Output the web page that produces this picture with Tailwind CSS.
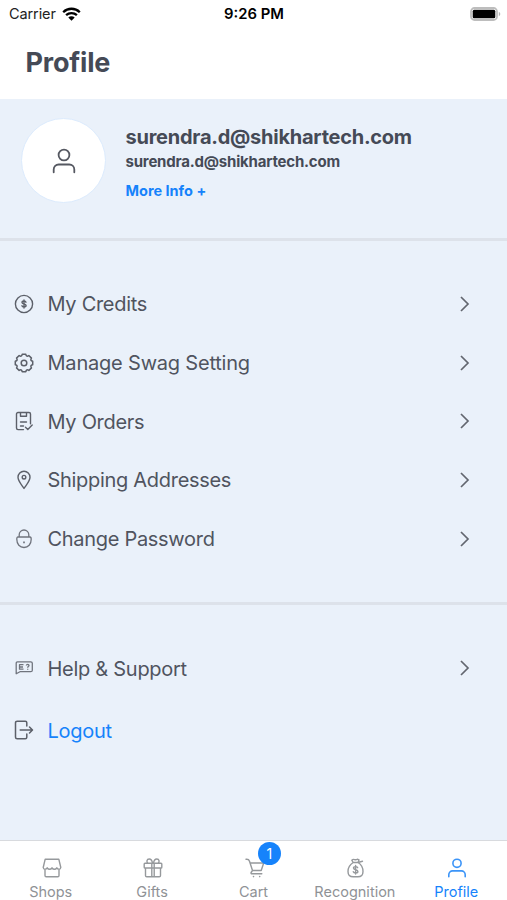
<!doctype html>
<html lang="en">

<head>
	<meta charset="UTF-8" />
	<meta name="viewport" content="width=device-width, initial-scale=1.0" />
	<title>Profile</title>
	<script src="https://cdn.jsdelivr.net/npm/@tailwindcss/browser@4"></script>
</head>

<body class="bg-white font-['Inter','Liberation_Sans',sans-serif] text-[#454a56]">
	<div class="flex h-[900px] w-[507px] flex-col overflow-hidden">

		<!-- status bar -->
		<div class="grid h-[27px] shrink-0 grid-cols-3 items-center pl-[9px] pr-[6px] text-black">
			<div class="flex items-center gap-[6px]">
				<span class="text-[14.5px] tracking-[-0.1px] text-[#222]">Carrier</span>
				<svg class="h-[14px] w-[19px]" viewBox="0 0 19 14">
					<path d="M1.2 5.2C5.9.6 13.1.6 17.8 5.2M4.1 8.2c3-2.9 7.8-2.9 10.8 0" fill="none" stroke="#000" stroke-width="2.3" />
					<path d="M9.5 13.7L6.3 10.5a4.5 4.5 0 0 1 6.4 0z" fill="#000" />
				</svg>
			</div>
			<span class="-ml-[2px] pt-[2px] text-center text-[14.8px] font-semibold">9:26 PM</span>
			<svg class="h-[14px] w-[31px] justify-self-end" viewBox="0 0 31 14">
				<rect x="1" y="1" width="26" height="12" rx="3.5" fill="#fff" stroke="#bdbdbd" stroke-width="1.8" />
				<rect x="2.7" y="2.7" width="22.6" height="8.6" rx="1.5" fill="#000" />
				<path d="M28.8 4.8c2 .8 2 3.6 0 4.4z" fill="#b5b5b5" />
			</svg>
		</div>

		<header class="flex h-[72px] shrink-0 items-center px-[25.5px]">
			<h1 class="text-[27px] font-bold tracking-[-0.2px]">Profile</h1>
		</header>

		<main class="flex-1 bg-[#eaf1fa]">
			<!-- user -->
			<section class="flex h-[142px] border-b-3 border-[#dde2ea] pl-[21px] pt-[19px]">
				<div class="flex size-[85px] items-center justify-center rounded-full border border-[#dcebfd] bg-white">
					<svg class="h-[26px] w-[24px]" viewBox="0 0 24 26" fill="none" stroke="#555861" stroke-width="1.8" stroke-linecap="round">
						<circle cx="12" cy="7" r="5.4" />
						<path d="M1.7 24.3v-2.8a5 5 0 0 1 5-5h10.6a5 5 0 0 1 5 5v2.8" />
					</svg>
				</div>
				<div class="ml-[19.5px] flex flex-col pt-[6px]">
					<p class="text-[20px] leading-[26px] font-bold tracking-[-0.25px]">surendra.d@shikhartech.com</p>
					<p class="text-[15px] leading-[24px] font-bold tracking-[-0.2px]">surendra.d@shikhartech.com</p>
					<a class="mt-[7px] text-[14.5px] leading-[20px] font-bold text-[#1683fb]" href="#">More Info +</a>
				</div>
			</section>

			<!-- menu -->
			<ul class="h-[364px] border-b-3 border-[#dde2ea] pl-[14px] pr-[37px] pt-[34px] text-[20px] tracking-[-0.3px] text-[#50545f]">
				<li class="flex h-[58.6px] items-center">
					<svg class="size-5" viewBox="0 0 20 20" fill="none" stroke="#5c6069" stroke-width="1.4" stroke-linecap="round">
						<circle cx="10" cy="10" r="8.6" />
						<path d="M12 8.2c-.3-.8-1-1.2-2-1.2-1.2 0-2 .5-2 1.4 0 2.1 4.1 1.1 4.1 3.2 0 .9-.9 1.4-2.1 1.4-1.1 0-1.8-.4-2.1-1.2M10 6v8" />
					</svg>
					<span class="ml-[13.5px] flex-1">My Credits</span>
					<svg class="h-4 w-[10px]" viewBox="0 0 10 16" fill="none" stroke="#62666f" stroke-width="1.7"><path d="M1 1l7 7-7 7" /></svg>
				</li>
				<li class="flex h-[58.6px] items-center">
					<svg class="size-5" viewBox="0 0 20 20" fill="none" stroke="#5c6069" stroke-width="1.5" stroke-linejoin="round">
						<circle cx="10" cy="10" r="2.8" />
						<path d="M18.7 8.2V11.800Q15.800 12.400 17.460 14.850L14.850 17.460Q12.400 15.800 11.800 18.700H8.200Q7.600 15.800 5.150 17.460L2.540 14.850Q4.200 12.400 1.300 11.800V8.200Q4.200 7.600 2.540 5.150L5.150 2.540Q7.600 4.200 8.200 1.300H11.800Q12.400 4.200 14.850 2.540L17.460 5.150Q15.800 7.600 18.700 8.200z" />
					</svg>
					<span class="ml-[13.5px] flex-1 tracking-[-0.2px]">Manage Swag Setting</span>
					<svg class="h-4 w-[10px]" viewBox="0 0 10 16" fill="none" stroke="#62666f" stroke-width="1.7"><path d="M1 1l7 7-7 7" /></svg>
				</li>
				<li class="flex h-[58.6px] items-center">
					<svg class="size-5" viewBox="0 0 20 20" fill="none" stroke="#5c6069" stroke-width="1.4" stroke-linecap="round" stroke-linejoin="round">
						<path d="M9.5 18.6H4A1.5 1.5 0 0 1 2.5 17.1V3A1.5 1.5 0 0 1 4 1.5h11A1.5 1.5 0 0 1 16.5 3v9.7M6.5 1.5v3.7h6V1.500M6.5 11h6M6.5 15h3M11.5 16.300l2.300 2.200 4.400-4.400" />
					</svg>
					<span class="ml-[13.5px] flex-1 pt-px">My Orders</span>
					<svg class="h-4 w-[10px]" viewBox="0 0 10 16" fill="none" stroke="#62666f" stroke-width="1.7"><path d="M1 1l7 7-7 7" /></svg>
				</li>
				<li class="flex h-[58.6px] items-center">
					<svg class="size-5" viewBox="0 0 20 20" fill="none" stroke="#5c6069" stroke-width="1.4" stroke-linejoin="round">
						<path d="M10 18.5C8 15.3 4 11.2 4 7.3a6 6 0 0 1 12 0c0 3.9-4 8-6 11.2z" />
						<circle cx="10" cy="7.2" r="1.8" />
					</svg>
					<span class="ml-[13.5px] flex-1">Shipping Addresses</span>
					<svg class="h-4 w-[10px]" viewBox="0 0 10 16" fill="none" stroke="#62666f" stroke-width="1.7"><path d="M1 1l7 7-7 7" /></svg>
				</li>
				<li class="flex h-[58.6px] items-center">
					<svg class="size-5" viewBox="0 0 20 20" fill="none" stroke="#70747d" stroke-width="1.3" stroke-linejoin="round">
						<path d="M5.2 8V5.8a4.8 4.8 0 0 1 9.6 0V8M4 8h12q1.2 0 1.2 2.2c0 5-3 8.3-7.2 8.3s-7.2-3.3-7.2-8.3Q2.8 8 4 8z" />
						<path d="M10 12.5v1.8" stroke-width="1.7" />
					</svg>
					<span class="ml-[13.5px] flex-1">Change Password</span>
					<svg class="h-4 w-[10px]" viewBox="0 0 10 16" fill="none" stroke="#62666f" stroke-width="1.7"><path d="M1 1l7 7-7 7" /></svg>
				</li>
			</ul>

			<ul class="pl-[14px] pr-[37px] pt-[32px] text-[20px] tracking-[-0.28px] text-[#50545f]">
				<li class="flex h-[62px] items-center">
					<svg class="size-5" viewBox="0 0 20 20" fill="none" stroke="#70747d" stroke-width="1.3" stroke-linejoin="round">
						<path d="M3.5 3.8h13.3q1.5 0 1.5 1.5v6.9q0 1.5-1.5 1.5H6l-3.8 2.1V5.3q0-1.5 1.3-1.5zM9.5 6.7H5.5v4.5h4M5.5 9H9M12.3 7.5q.2-1.2 1.4-1.2 1.3 0 1.3 1.1c0 .9-1.3 1-1.3 2.4M13.7 10.8v1" />
					</svg>
					<span class="ml-[13.5px] flex-1 pt-px">Help &amp; Support</span>
					<svg class="h-4 w-[10px]" viewBox="0 0 10 16" fill="none" stroke="#62666f" stroke-width="1.7"><path d="M1 1l7 7-7 7" /></svg>
				</li>
				<li class="flex h-[62px] items-center">
					<svg class="size-5" viewBox="0 0 20 20" fill="none" stroke="#5c6069" stroke-width="1.5" stroke-linecap="round" stroke-linejoin="round">
						<path d="M12.8 6V2.8q0-1.5-1.5-1.5H3.2q-1.7 0-1.7 1.5v14.4q0 1.5 1.7 1.5h8.1q1.5 0 1.5-1.5V14M6.2 10h12M15.5 7l3 3-3 3" />
					</svg>
					<span class="ml-[13.5px] flex-1 pt-[2px] text-[#1683fb]">Logout</span>
				</li>
			</ul>
		</main>

		<!-- tabs -->
		<nav class="grid h-[60px] shrink-0 grid-cols-5 border-t border-[#d8dade] text-center text-[14.5px] leading-[20px] text-[#8f9296]">
			<a class="flex flex-col items-center pt-[17px]" href="#">
				<svg class="mb-[4px] ml-[3px] size-5" viewBox="0 0 20 20" fill="none" stroke="#96999c" stroke-width="1.4" stroke-linejoin="round">
					<path d="M3.2 1.2h13.6l2 8.3q-.3 1.8-1.8 1.8t-2.2-1.5q-.8 1.5-2.4 1.5T10 9.8q-.8 1.5-2.4 1.5T5.2 9.8q-.7 1.5-2.2 1.5t-1.8-1.8zM3 11.3v6.2q0 1.2 1.2 1.2h11.6q1.2 0 1.2-1.2v-6.2" />
				</svg>
				Shops
			</a>
			<a class="flex flex-col items-center pt-[17px]" href="#">
				<svg class="mb-[4px] ml-[1px] size-5" viewBox="0 0 20 20" fill="none" stroke="#96999c" stroke-width="1.4" stroke-linejoin="round">
					<path d="M2 5.3h16q.8 0 .8.8v3.1q0 .8-.8.8H2q-.8 0-.8-.8V6.1q0-.8.8-.8zM2.5 10v7.5q0 1.2 1.2 1.2h12.6q1.2 0 1.2-1.2V10M8.8 5.3v13.4M11.2 5.3v13.4" />
					<path d="M9.5 5.3C9.2 3 8 1 6.2 1 3.5 1 3.5 4 4.7 5.3M10.5 5.3C10.8 3 12 1 13.8 1c2.7 0 2.7 3 1.5 4.3" />
				</svg>
				Gifts
			</a>
			<a class="relative flex flex-col items-center pt-[17px]" href="#">
				<svg class="mb-[4px] ml-[3px] size-5" viewBox="0 0 20 20" fill="none" stroke="#96999c" stroke-width="1.4" stroke-linecap="round" stroke-linejoin="round">
					<path d="M1 1.3q2.8-.3 3.5 1.9l3 9.3M5.2 5h13.5l-2.5 7.5H7.5l-1.400 2q-.4 1.300 1 1.300h9.700" />
					<circle cx="8.5" cy="18.6" r=".8" fill="#96999c" stroke="none" />
					<circle cx="14.7" cy="18.6" r=".8" fill="#96999c" stroke="none" />
				</svg>
				Cart
				<span class="absolute left-[55px] top-[1px] size-[23px] rounded-full bg-[#1683fb] text-[14px] leading-[23px] text-white">1</span>
			</a>
			<a class="flex flex-col items-center pt-[17px]" href="#">
				<svg class="mb-[4px] ml-[3px] size-5" viewBox="0 0 20 20" fill="none" stroke="#96999c" stroke-width="1.4" stroke-linecap="round" stroke-linejoin="round">
					<path d="M7.2 4.5C4.5 6.2 2 10 2 13.5q0 5.3 5.2 5.3h4.6q5.2 0 5.2-5.3c0-3.5-2.2-7.3-5-9zM7.2 4.5L5.8 2.2q1.2-1.2 2.7-.6 1.5.6 2.8-.4l1.7.8-1 2.5 4.5-1.2" />
					<path d="M11.7 9.7c-.4-.8-1.1-1.1-2.1-1.1-1.2 0-2.1.6-2.1 1.5 0 2.3 4.4 1.1 4.4 3.4 0 1-1 1.5-2.3 1.5-1.2 0-2-.4-2.3-1.3M9.6 7.5v8.5" />
				</svg>
				Recognition
			</a>
			<a class="flex flex-col items-center pt-[17px] text-[#1683fb]" href="#">
				<svg class="mb-[4px] ml-[1px] size-5" viewBox="0 0 20 20" fill="none" stroke="#3b94f8" stroke-width="1.6" stroke-linecap="round">
					<circle cx="10" cy="5.3" r="4.1" />
					<path d="M1.8 18.8v-2.1a3.8 3.8 0 0 1 3.8-3.8h8.8a3.8 3.8 0 0 1 3.8 3.8v2.1" />
				</svg>
				Profile
			</a>
		</nav>
	</div>
</body>

</html>
